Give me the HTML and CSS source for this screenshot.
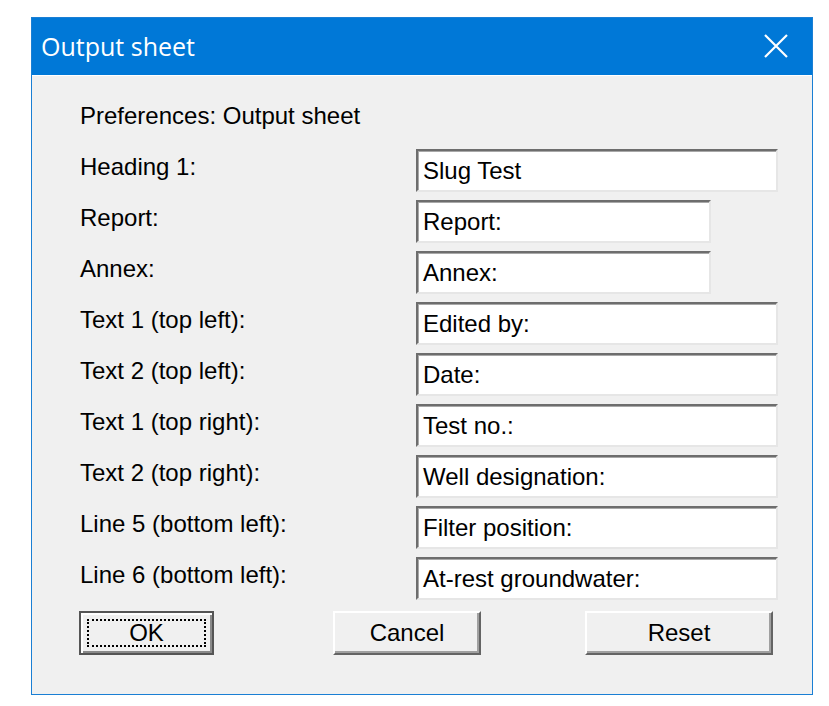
FILE: index.html
```html
<!DOCTYPE html>
<html>
<head>
<meta charset="utf-8">
<title>Output sheet</title>
<link rel="stylesheet" href="styles.css">
</head>
<body>
<div class="window">
  <div class="titlebar">
    <span class="title">Output sheet</span>
    <span class="close">
      <svg width="24" height="24" viewBox="0 0 24 24"><path d="M1 1 L23 23 M23 1 L1 23" stroke="#fff" stroke-width="2.2" fill="none"/></svg>
    </span>
  </div>
  <div class="client">
    <p class="intro">Preferences: Output sheet</p>
    <div class="form">
      <div class="row"><span class="label">Heading 1:</span><span class="edit wide">Slug Test</span></div>
      <div class="row"><span class="label">Report:</span><span class="edit short">Report:</span></div>
      <div class="row"><span class="label">Annex:</span><span class="edit short">Annex:</span></div>
      <div class="row"><span class="label">Text 1 (top left):</span><span class="edit wide">Edited by:</span></div>
      <div class="row"><span class="label">Text 2 (top left):</span><span class="edit wide">Date:</span></div>
      <div class="row"><span class="label">Text 1 (top right):</span><span class="edit wide">Test no.:</span></div>
      <div class="row"><span class="label">Text 2 (top right):</span><span class="edit wide">Well designation:</span></div>
      <div class="row"><span class="label">Line 5 (bottom left):</span><span class="edit wide">Filter position:</span></div>
      <div class="row"><span class="label">Line 6 (bottom left):</span><span class="edit wide">At-rest groundwater:</span></div>
    </div>
    <div class="buttons">
      <div class="btn btn-ok"><span class="focus">OK</span></div>
      <div class="btn btn-cancel">Cancel</div>
      <div class="btn btn-reset">Reset</div>
    </div>
  </div>
</div>
</body>
</html>
```
FILE: styles.css
```css
html, body {
  margin: 0;
  padding: 0;
  background: #ffffff;
}
body {
  font-family: "Liberation Sans", Arial, sans-serif;
  color: #000;
}
.window {
  margin: 17px 0 0 31px;
  width: 780px;
  height: 676px;
  border: 1px solid #1a7fd4;
  background: #f0f0f0;
  display: flex;
  flex-direction: column;
}
.titlebar {
  height: 57px;
  background: #0078d7;
  display: flex;
  align-items: center;
  justify-content: space-between;
  padding: 0 24px 0 9px;
  flex: none;
}
.title {
  font-family: "Open Sans", "Noto Sans", sans-serif;
  font-size: 25px;
  color: #ffffff;
  position: relative;
  top: -1px;
}
.close {
  display: flex;
  width: 24px;
  height: 24px;
  position: relative;
  top: -1px;
}
.client {
  flex: 1;
  padding: 26px 0 0 48px;
  font-size: 24px;
  border-top: 1px solid #ffffff;
}
.intro {
  margin: 0;
  line-height: 28px;
}
.form {
  margin-top: 19px;
  display: flex;
  flex-direction: column;
  gap: 8px;
}
.row {
  display: flex;
  align-items: center;
  height: 43px;
}
.label {
  width: 336px;
  flex: none;
  line-height: 28px;
  align-self: flex-start;
  padding-top: 4px;
}
.edit {
  box-sizing: border-box;
  height: 43px;
  background: #ffffff;
  border-style: solid;
  border-width: 2px;
  border-color: #6d6d6d #e6e6e6 #e6e6e6 #6d6d6d;
  box-shadow: inset 1px 1px 0 #a8a8a8;
  padding: 0 5px;
  display: flex;
  align-items: center;
  line-height: 28px;
  white-space: nowrap;
}
.wide { width: 362px; }
.short { width: 295px; }
.buttons {
  display: flex;
  margin-top: 11px;
}
.btn {
  box-sizing: border-box;
  height: 44px;
  display: flex;
  align-items: center;
  justify-content: center;
  border-style: solid;
  border-width: 2px;
  border-color: #ffffff #646464 #646464 #ffffff;
  box-shadow: inset -2px -2px 0 #a0a0a0;
  line-height: 28px;
}
.btn-ok {
  width: 135px;
  margin-left: -1px;
  border: 2px solid #555555;
  box-shadow: inset 2px 2px 0 #ffffff, inset -2px -2px 0 #8a8a8a;
  padding: 6px;
}
.btn-ok .focus {
  flex: 1;
  align-self: stretch;
  display: flex;
  align-items: center;
  justify-content: center;
  border: 2px dotted #000;
}
.btn-cancel {
  width: 148px;
  margin-left: 119px;
}
.btn-reset {
  width: 188px;
  margin-left: 104px;
}
```
